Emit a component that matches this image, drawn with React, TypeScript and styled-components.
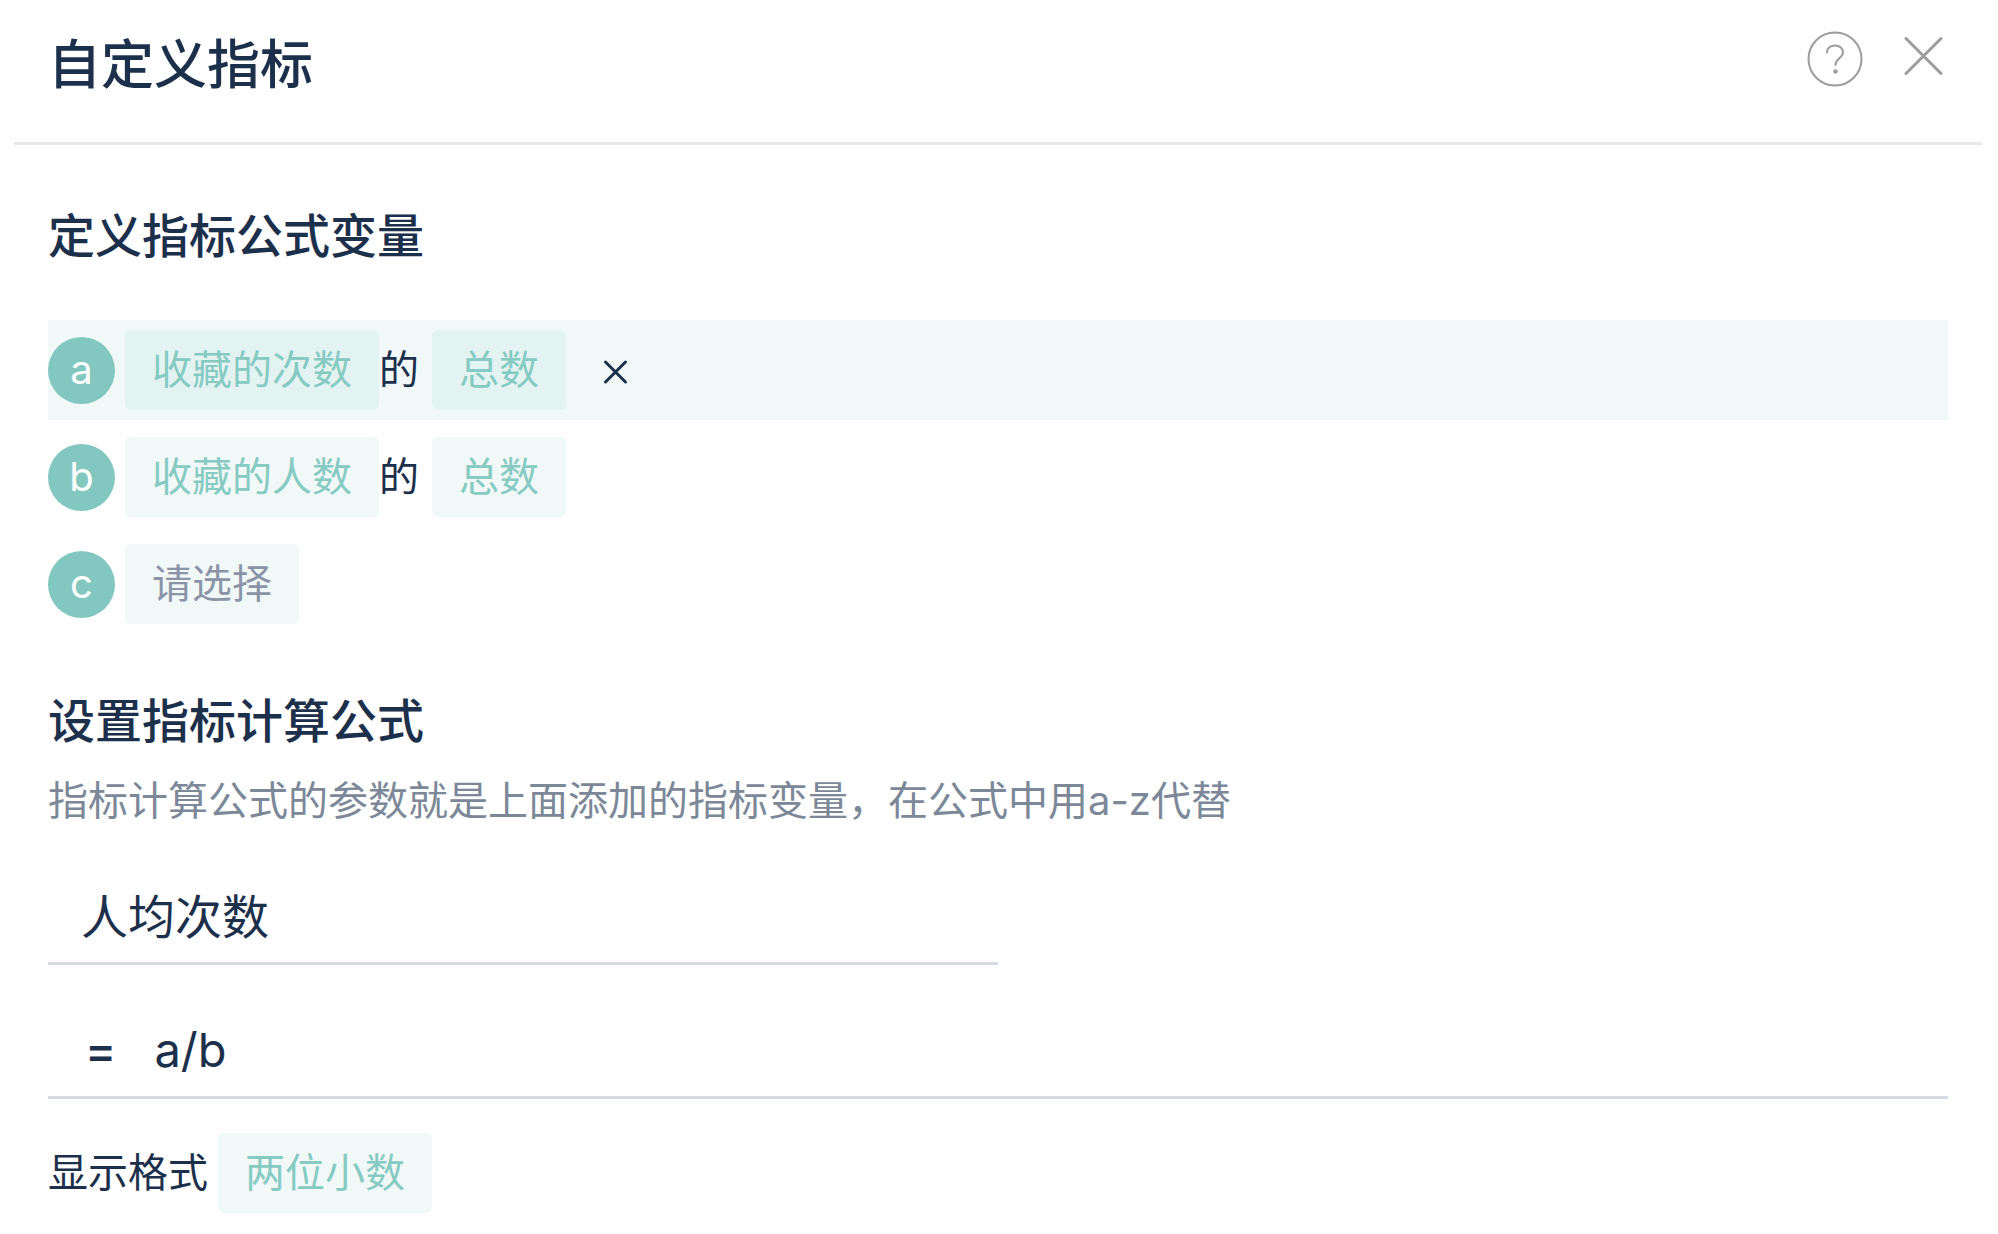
import React, { useState } from "react";
import styled, { createGlobalStyle } from "styled-components";

const ink = "#1c304c";
const teal = "#82c8c0";
const line = "#d5dae1";

const GlobalStyle = createGlobalStyle`
  *, *::before, *::after { box-sizing: border-box; }
  body {
    margin: 0;
    background: #fefefe;
    color: ${ink};
    font-family: Inter, "Noto Sans CJK SC", sans-serif;
    font-size: 40px;
    line-height: 60px;
  }
  button, input { font: inherit; color: inherit; }
`;

const Panel = styled.main`
  padding: 0 16px 20px 14px;
`;

const Header = styled.header`
  display: flex;
  align-items: flex-start;
  justify-content: space-between;
  padding: 30px 34px 42px;
  border-bottom: 3px solid #e8e8eb;
`;

const Title = styled.h1`
  margin: 0;
  font-size: 53px;
  font-weight: 500;
  line-height: 70px;
`;

const Actions = styled.div`
  display: flex;
  align-items: flex-start;
  gap: 32px;
`;

const IconButton = styled.button`
  display: block;
  padding: 0;
  border: 0;
  background: none;
  cursor: pointer;

  svg {
    display: block;
    fill: none;
    stroke: #9c9c9c;
    stroke-linecap: round;
  }
`;

const Section = styled.section`
  padding: ${({ $top }: { $top: number }) => $top}px 34px 0;
`;

const Heading = styled.h2`
  margin: 0;
  font-size: 47px;
  font-weight: 500;
  line-height: 60px;
`;

const Hint = styled.p`
  margin: 20px 0 0;
  color: #7c8898;
`;

const VariableList = styled.ul`
  display: flex;
  flex-direction: column;
  gap: 7px;
  margin: 54px 0 0;
  padding: 0;
  list-style: none;
`;

const VariableRow = styled.li<{ $active?: boolean }>`
  display: flex;
  align-items: center;
  height: 100px;
  background: ${({ $active }) => ($active ? "#f0f9f8" : "transparent")};
`;

const Letter = styled.span`
  display: flex;
  align-items: center;
  justify-content: center;
  width: 67px;
  height: 67px;
  margin-right: 10px;
  border-radius: 50%;
  background: ${teal};
  color: #fff;
`;

const Chip = styled.button<{ $muted?: boolean }>`
  height: 80px;
  padding: 0 27px;
  border: 0;
  border-radius: 6px;
  background: rgba(122, 200, 195, 0.1);
  line-height: 60px;
  white-space: nowrap;
  cursor: pointer;

  && { color: ${({ $muted }) => ($muted ? "#8b94a6" : "#86cac2")}; }
`;

const Joiner = styled.span`
  margin-right: 13px;
`;

const RemoveButton = styled(IconButton)`
  margin-left: 32px;

  svg { stroke: ${ink}; }
`;

const NameInput = styled.input`
  display: block;
  width: 50%;
  height: 100px;
  margin-top: 34px;
  padding: 0 33px;
  border: 0;
  border-bottom: 3px solid ${line};
  outline: 0;
  background: none;
  font-size: 47px;
`;

const FormulaField = styled.label`
  display: flex;
  align-items: center;
  gap: 38px;
  height: 100px;
  margin-top: 34px;
  padding: 4px 37px 0;
  border-bottom: 3px solid ${line};
  font-size: 47px;
`;

const Equals = styled.span`
  font-weight: 500;
`;

const FormulaInput = styled.input`
  flex: 1;
  min-width: 0;
  padding: 0;
  border: 0;
  outline: 0;
  background: none;
`;

const FormatRow = styled.div`
  display: flex;
  align-items: center;
  gap: 10px;
  margin-top: 34px;
`;

const variables = [
  { letter: "a", metric: "收藏的次数", aggregate: "总数", active: true },
  { letter: "b", metric: "收藏的人数", aggregate: "总数" },
  { letter: "c" },
];

export default function App() {
  const [name, setName] = useState("人均次数");
  const [formula, setFormula] = useState("a/b");

  return (
    <>
      <GlobalStyle />
      <Panel>
        <Header>
          <Title>自定义指标</Title>
          <Actions>
            <IconButton type="button" aria-label="帮助">
              <svg width="58" height="58" viewBox="0 0 58 58" strokeWidth="2">
                <circle cx="29" cy="29" r="26.5" />
                <path d="M21 22.5v-.5c0-4 3.600-6.500 8-6.500s8 2.700 8 6.800c0 6-7.500 6.200-7.500 12.700" />
                <circle cx="29.500" cy="41.500" r="2.200" fill="#9c9c9c" stroke="none" />
              </svg>
            </IconButton>
            <IconButton type="button" aria-label="关闭">
              <svg width="52" height="52" viewBox="0 0 52 52" strokeWidth="3">
                <path d="M10 8.500l35 35M45 8.500l-35 35" />
              </svg>
            </IconButton>
          </Actions>
        </Header>

        <Section $top={61}>
          <Heading>定义指标公式变量</Heading>
          <VariableList>
            {variables.map((v) => (
              <VariableRow key={v.letter} $active={v.active}>
                <Letter>{v.letter}</Letter>
                <Chip type="button" aria-haspopup="listbox" $muted={!v.metric}>
                  {v.metric ?? "请选择"}
                </Chip>
                {v.aggregate && (
                  <>
                    <Joiner>的</Joiner>
                    <Chip type="button" aria-haspopup="listbox">
                      {v.aggregate}
                    </Chip>
                  </>
                )}
                {v.active && (
                  <RemoveButton type="button" aria-label="删除变量">
                    <svg width="34" height="34" viewBox="0 0 34 34" strokeWidth="3">
                      <path d="M7.500 9l20 20M27.500 9l-20 20" />
                    </svg>
                  </RemoveButton>
                )}
              </VariableRow>
            ))}
          </VariableList>
        </Section>

        <Section $top={57}>
          <Heading>设置指标计算公式</Heading>
          <Hint>指标计算公式的参数就是上面添加的指标变量，在公式中用a-z代替</Hint>
          <NameInput
            aria-label="指标名称"
            value={name}
            onChange={(e) => setName(e.target.value)}
          />
          <FormulaField>
            <Equals>=</Equals>
            <FormulaInput
              aria-label="计算公式"
              value={formula}
              onChange={(e) => setFormula(e.target.value)}
            />
          </FormulaField>
          <FormatRow>
            <span id="format-label">显示格式</span>
            <Chip type="button" aria-haspopup="listbox" aria-describedby="format-label">
              两位小数
            </Chip>
          </FormatRow>
        </Section>
      </Panel>
    </>
  );
}
